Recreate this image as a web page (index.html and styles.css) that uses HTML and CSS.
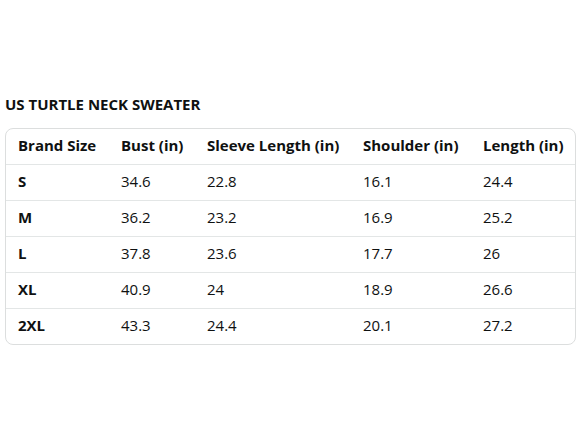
FILE: index.html
```html
<!DOCTYPE html>
<html>
<head>
<meta charset="utf-8">
<link rel="stylesheet" href="styles.css">
</head>
<body>
<main class="page">
  <h2 class="title">US TURTLE NECK SWEATER</h2>
  <div class="table-wrap">
    <table class="size-table">
      <colgroup>
        <col class="c1"><col class="c2"><col class="c3"><col class="c4"><col class="c5">
      </colgroup>
      <thead>
        <tr><th>Brand Size</th><th>Bust (in)</th><th>Sleeve Length (in)</th><th>Shoulder (in)</th><th>Length (in)</th></tr>
      </thead>
      <tbody>
        <tr><th>S</th><td>34.6</td><td>22.8</td><td>16.1</td><td>24.4</td></tr>
        <tr><th>M</th><td>36.2</td><td>23.2</td><td>16.9</td><td>25.2</td></tr>
        <tr><th>L</th><td>37.8</td><td>23.6</td><td>17.7</td><td>26</td></tr>
        <tr><th>XL</th><td>40.9</td><td>24</td><td>18.9</td><td>26.6</td></tr>
        <tr><th>2XL</th><td>43.3</td><td>24.4</td><td>20.1</td><td>27.2</td></tr>
      </tbody>
    </table>
  </div>
</main>
</body>
</html>
```
FILE: styles.css
```css
html, body {
  margin: 0;
  padding: 0;
  background: #ffffff;
}
.page {
  padding: 94px 12px 0 5px;
  font-family: "Open Sans", "Noto Sans", sans-serif;
  color: #0f1111;
}
.title {
  margin: 0 0 14px 0;
  font-size: 15px;
  line-height: 20px;
  font-weight: 700;
}
.table-wrap {
  width: 569px;
  border: 1px solid #dcdede;
  border-radius: 8px;
  overflow: hidden;
}
.size-table {
  width: 100%;
  border-collapse: collapse;
  table-layout: fixed;
  font-size: 15px;
}
.c1 { width: 103px; }
.c2 { width: 86px; }
.c3 { width: 156px; }
.c4 { width: 120px; }
.c5 { width: auto; }
.size-table th,
.size-table td {
  height: 32px;
  padding: 0 0 3px 12px;
  text-align: left;
  white-space: nowrap;
  border-top: 1px solid #e3e6e6;
}
.size-table thead th { border-top: none; font-weight: 700; }
.size-table tbody th { font-weight: 700; }
.size-table td { font-weight: 400; }
```
